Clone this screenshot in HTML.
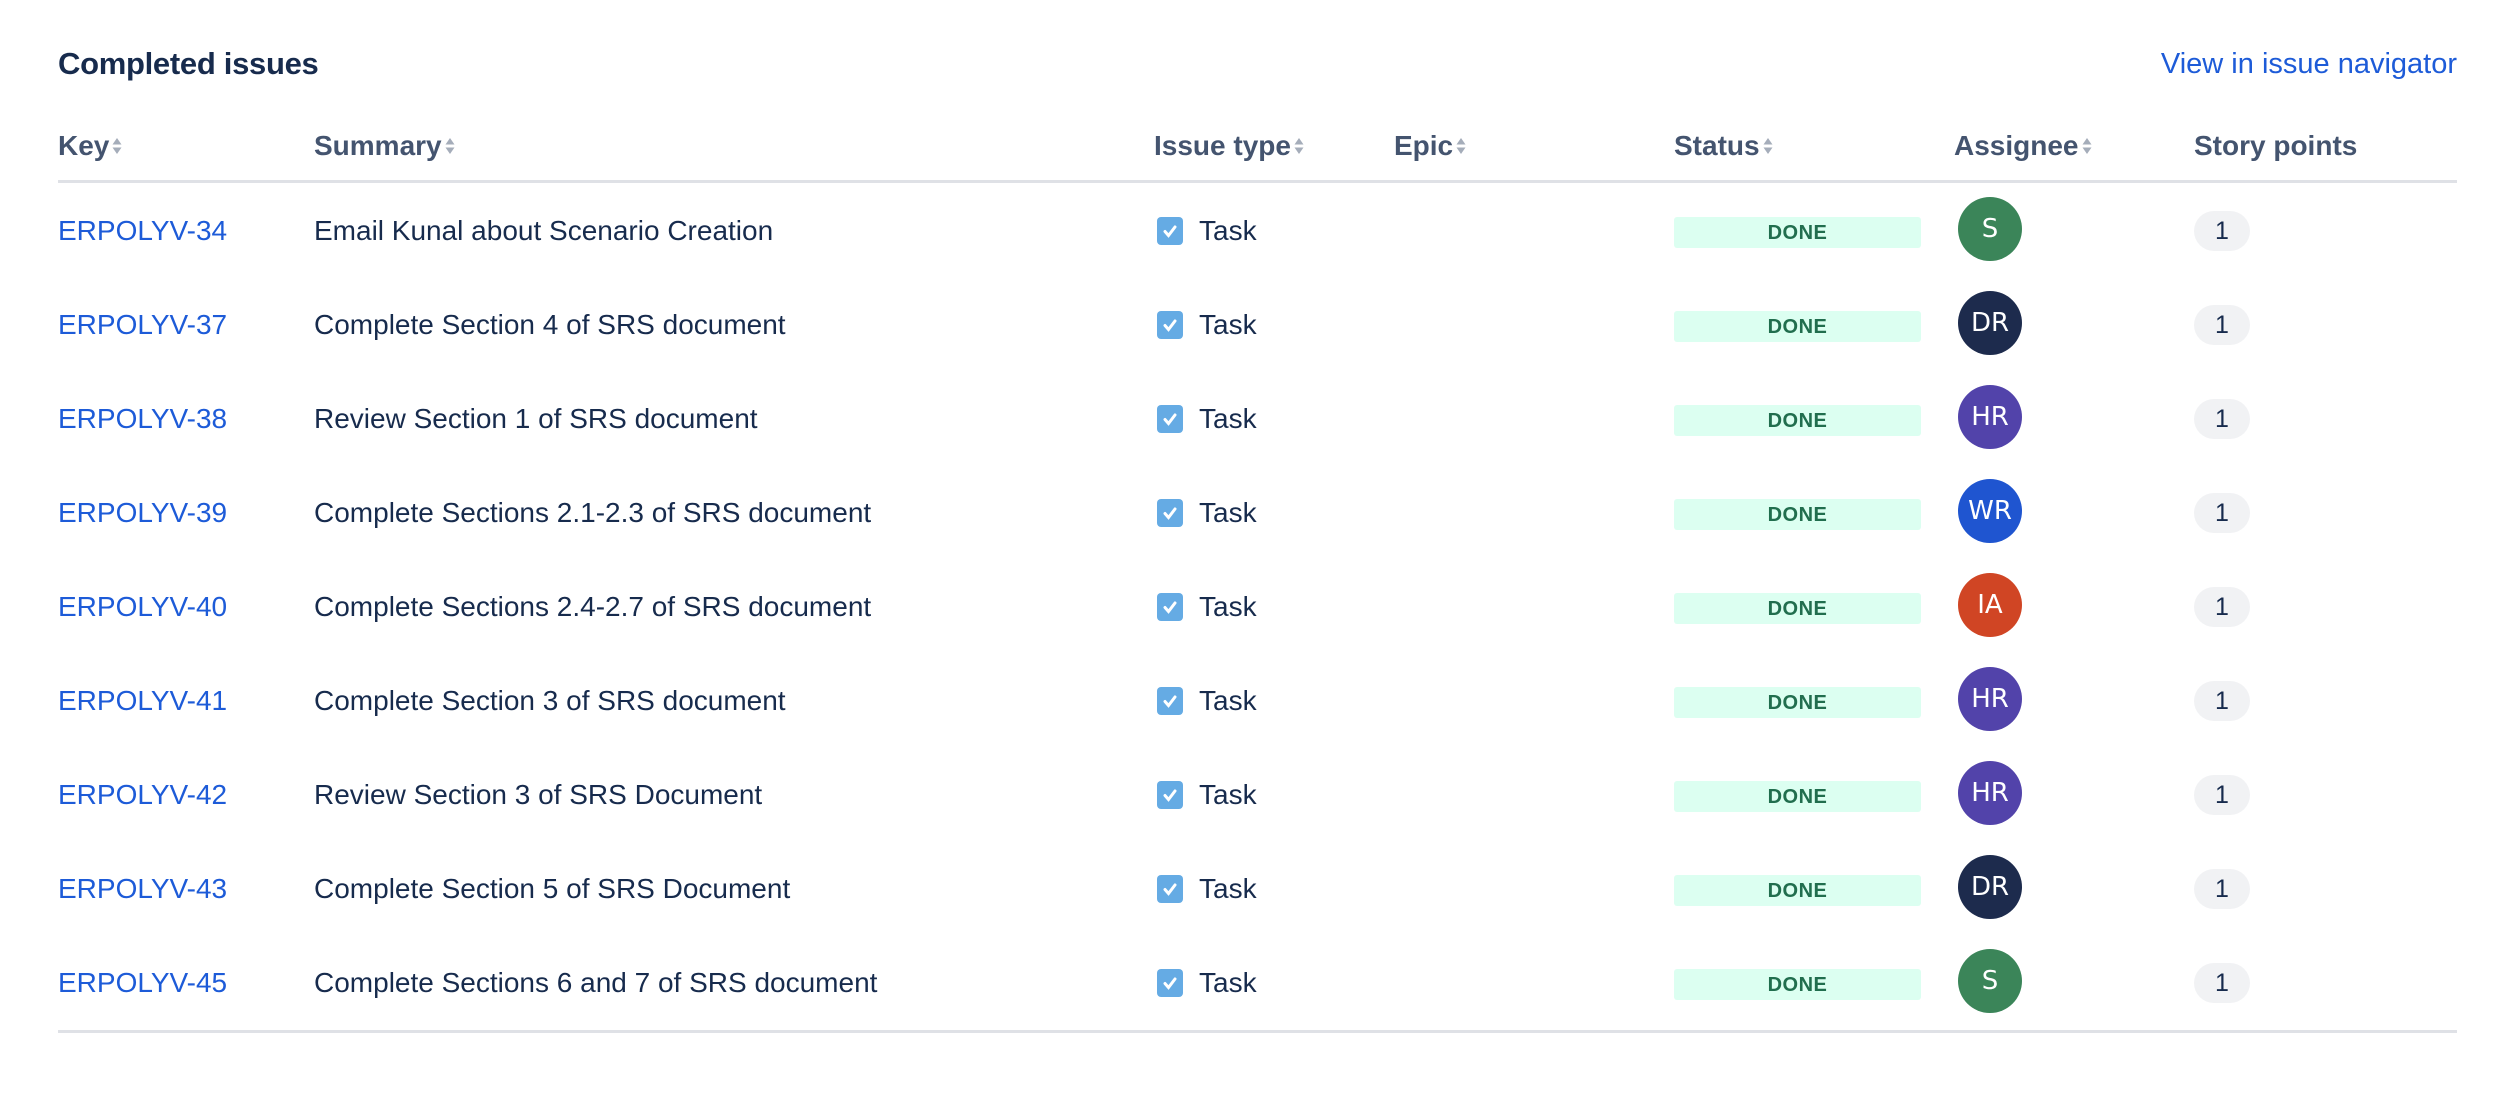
<!DOCTYPE html>
<html><head><meta charset="utf-8"><style>
body{margin:0;width:2516px;height:1094px;background:#fff;font-family:"Liberation Sans",sans-serif;color:#172b4d;position:relative;overflow:hidden}
.a{position:absolute;white-space:nowrap}
h1{position:absolute;left:58px;top:46px;margin:0;font-size:31px;font-weight:bold;color:#172b4d;letter-spacing:-0.3px}
.nav{position:absolute;right:59px;top:48px;font-size:29px;color:#1d5bd8}
.th{position:absolute;top:130px;font-size:28px;font-weight:bold;color:#44546f;white-space:nowrap}
.sort{display:inline-block;vertical-align:middle;margin-left:2px;width:12px;height:22px;position:relative;top:-2px}
.line{position:absolute;left:58px;width:2399px;height:3px;background:#dfe1e6}
.row{position:absolute;left:0;width:2516px;height:94px}
.key{position:absolute;left:58px;top:15px;font-size:28px;color:#1d5bd8;white-space:nowrap}
.sum{position:absolute;left:314px;top:15px;font-size:28px;color:#172b4d;white-space:nowrap}
.chk{position:absolute;left:1157px;top:17px;width:26px;height:28px;border-radius:4px;background:#65abe4}
.task{position:absolute;left:1199px;top:15px;font-size:28px}
.done{position:absolute;left:1674px;top:17px;width:247px;height:31px;border-radius:3px;background:#dcfff1;color:#216e4e;font-weight:bold;font-size:20px;line-height:32px;text-align:center;letter-spacing:0.5px}
.av{position:absolute;left:1958px;top:-3px;width:64px;height:64px;border-radius:50%;color:#fff;font-size:26px;line-height:64px;text-align:center;font-family:"DejaVu Sans",sans-serif}
.sp{position:absolute;left:2194px;top:11px;width:56px;height:40px;border-radius:20px;background:#f1f2f4;font-size:25px;line-height:40px;text-align:center}
</style></head><body>
<h1>Completed issues</h1>
<div class="a nav">View in issue navigator</div>
<svg width="0" height="0" style="position:absolute"><defs><symbol id="s" viewBox="0 0 12 22"><path d="M6 3 L10.5 9.5 H1.5Z M6 19 L10.5 12.5 H1.5Z" fill="#a5adba"/></symbol></defs></svg>
<div class="th" style="left:58px">Key<svg class="sort"><use href="#s"/></svg></div>
<div class="th" style="left:314px">Summary<svg class="sort"><use href="#s"/></svg></div>
<div class="th" style="left:1154px">Issue type<svg class="sort"><use href="#s"/></svg></div>
<div class="th" style="left:1394px">Epic<svg class="sort"><use href="#s"/></svg></div>
<div class="th" style="left:1674px">Status<svg class="sort"><use href="#s"/></svg></div>
<div class="th" style="left:1954px">Assignee<svg class="sort"><use href="#s"/></svg></div>
<div class="th" style="left:2194px">Story points</div>
<div class="line" style="top:180px"></div>
<div class="line" style="top:1030px"></div>

<div class="row" style="top:200px"><div class="key">ERPOLYV-34</div><div class="sum">Email Kunal about Scenario Creation</div><div class="chk"><svg width="26" height="28"><path d="M8 14.5 L11.5 18.5 L18 10" stroke="#fff" stroke-width="3" fill="none" stroke-linecap="round"/></svg></div><div class="task">Task</div><div class="done">DONE</div><div class="av" style="background:#3b8559">S</div><div class="sp">1</div></div>
<div class="row" style="top:294px"><div class="key">ERPOLYV-37</div><div class="sum">Complete Section 4 of SRS document</div><div class="chk"><svg width="26" height="28"><path d="M8 14.5 L11.5 18.5 L18 10" stroke="#fff" stroke-width="3" fill="none" stroke-linecap="round"/></svg></div><div class="task">Task</div><div class="done">DONE</div><div class="av" style="background:#1d2b4d">DR</div><div class="sp">1</div></div>
<div class="row" style="top:388px"><div class="key">ERPOLYV-38</div><div class="sum">Review Section 1 of SRS document</div><div class="chk"><svg width="26" height="28"><path d="M8 14.5 L11.5 18.5 L18 10" stroke="#fff" stroke-width="3" fill="none" stroke-linecap="round"/></svg></div><div class="task">Task</div><div class="done">DONE</div><div class="av" style="background:#5243aa">HR</div><div class="sp">1</div></div>
<div class="row" style="top:482px"><div class="key">ERPOLYV-39</div><div class="sum">Complete Sections 2.1-2.3 of SRS document</div><div class="chk"><svg width="26" height="28"><path d="M8 14.5 L11.5 18.5 L18 10" stroke="#fff" stroke-width="3" fill="none" stroke-linecap="round"/></svg></div><div class="task">Task</div><div class="done">DONE</div><div class="av" style="background:#1f55d0">WR</div><div class="sp">1</div></div>
<div class="row" style="top:576px"><div class="key">ERPOLYV-40</div><div class="sum">Complete Sections 2.4-2.7 of SRS document</div><div class="chk"><svg width="26" height="28"><path d="M8 14.5 L11.5 18.5 L18 10" stroke="#fff" stroke-width="3" fill="none" stroke-linecap="round"/></svg></div><div class="task">Task</div><div class="done">DONE</div><div class="av" style="background:#d04524">IA</div><div class="sp">1</div></div>
<div class="row" style="top:670px"><div class="key">ERPOLYV-41</div><div class="sum">Complete Section 3 of SRS document</div><div class="chk"><svg width="26" height="28"><path d="M8 14.5 L11.5 18.5 L18 10" stroke="#fff" stroke-width="3" fill="none" stroke-linecap="round"/></svg></div><div class="task">Task</div><div class="done">DONE</div><div class="av" style="background:#5243aa">HR</div><div class="sp">1</div></div>
<div class="row" style="top:764px"><div class="key">ERPOLYV-42</div><div class="sum">Review Section 3 of SRS Document</div><div class="chk"><svg width="26" height="28"><path d="M8 14.5 L11.5 18.5 L18 10" stroke="#fff" stroke-width="3" fill="none" stroke-linecap="round"/></svg></div><div class="task">Task</div><div class="done">DONE</div><div class="av" style="background:#5243aa">HR</div><div class="sp">1</div></div>
<div class="row" style="top:858px"><div class="key">ERPOLYV-43</div><div class="sum">Complete Section 5 of SRS Document</div><div class="chk"><svg width="26" height="28"><path d="M8 14.5 L11.5 18.5 L18 10" stroke="#fff" stroke-width="3" fill="none" stroke-linecap="round"/></svg></div><div class="task">Task</div><div class="done">DONE</div><div class="av" style="background:#1d2b4d">DR</div><div class="sp">1</div></div>
<div class="row" style="top:952px"><div class="key">ERPOLYV-45</div><div class="sum">Complete Sections 6 and 7 of SRS document</div><div class="chk"><svg width="26" height="28"><path d="M8 14.5 L11.5 18.5 L18 10" stroke="#fff" stroke-width="3" fill="none" stroke-linecap="round"/></svg></div><div class="task">Task</div><div class="done">DONE</div><div class="av" style="background:#3b8559">S</div><div class="sp">1</div></div>
</body></html>
